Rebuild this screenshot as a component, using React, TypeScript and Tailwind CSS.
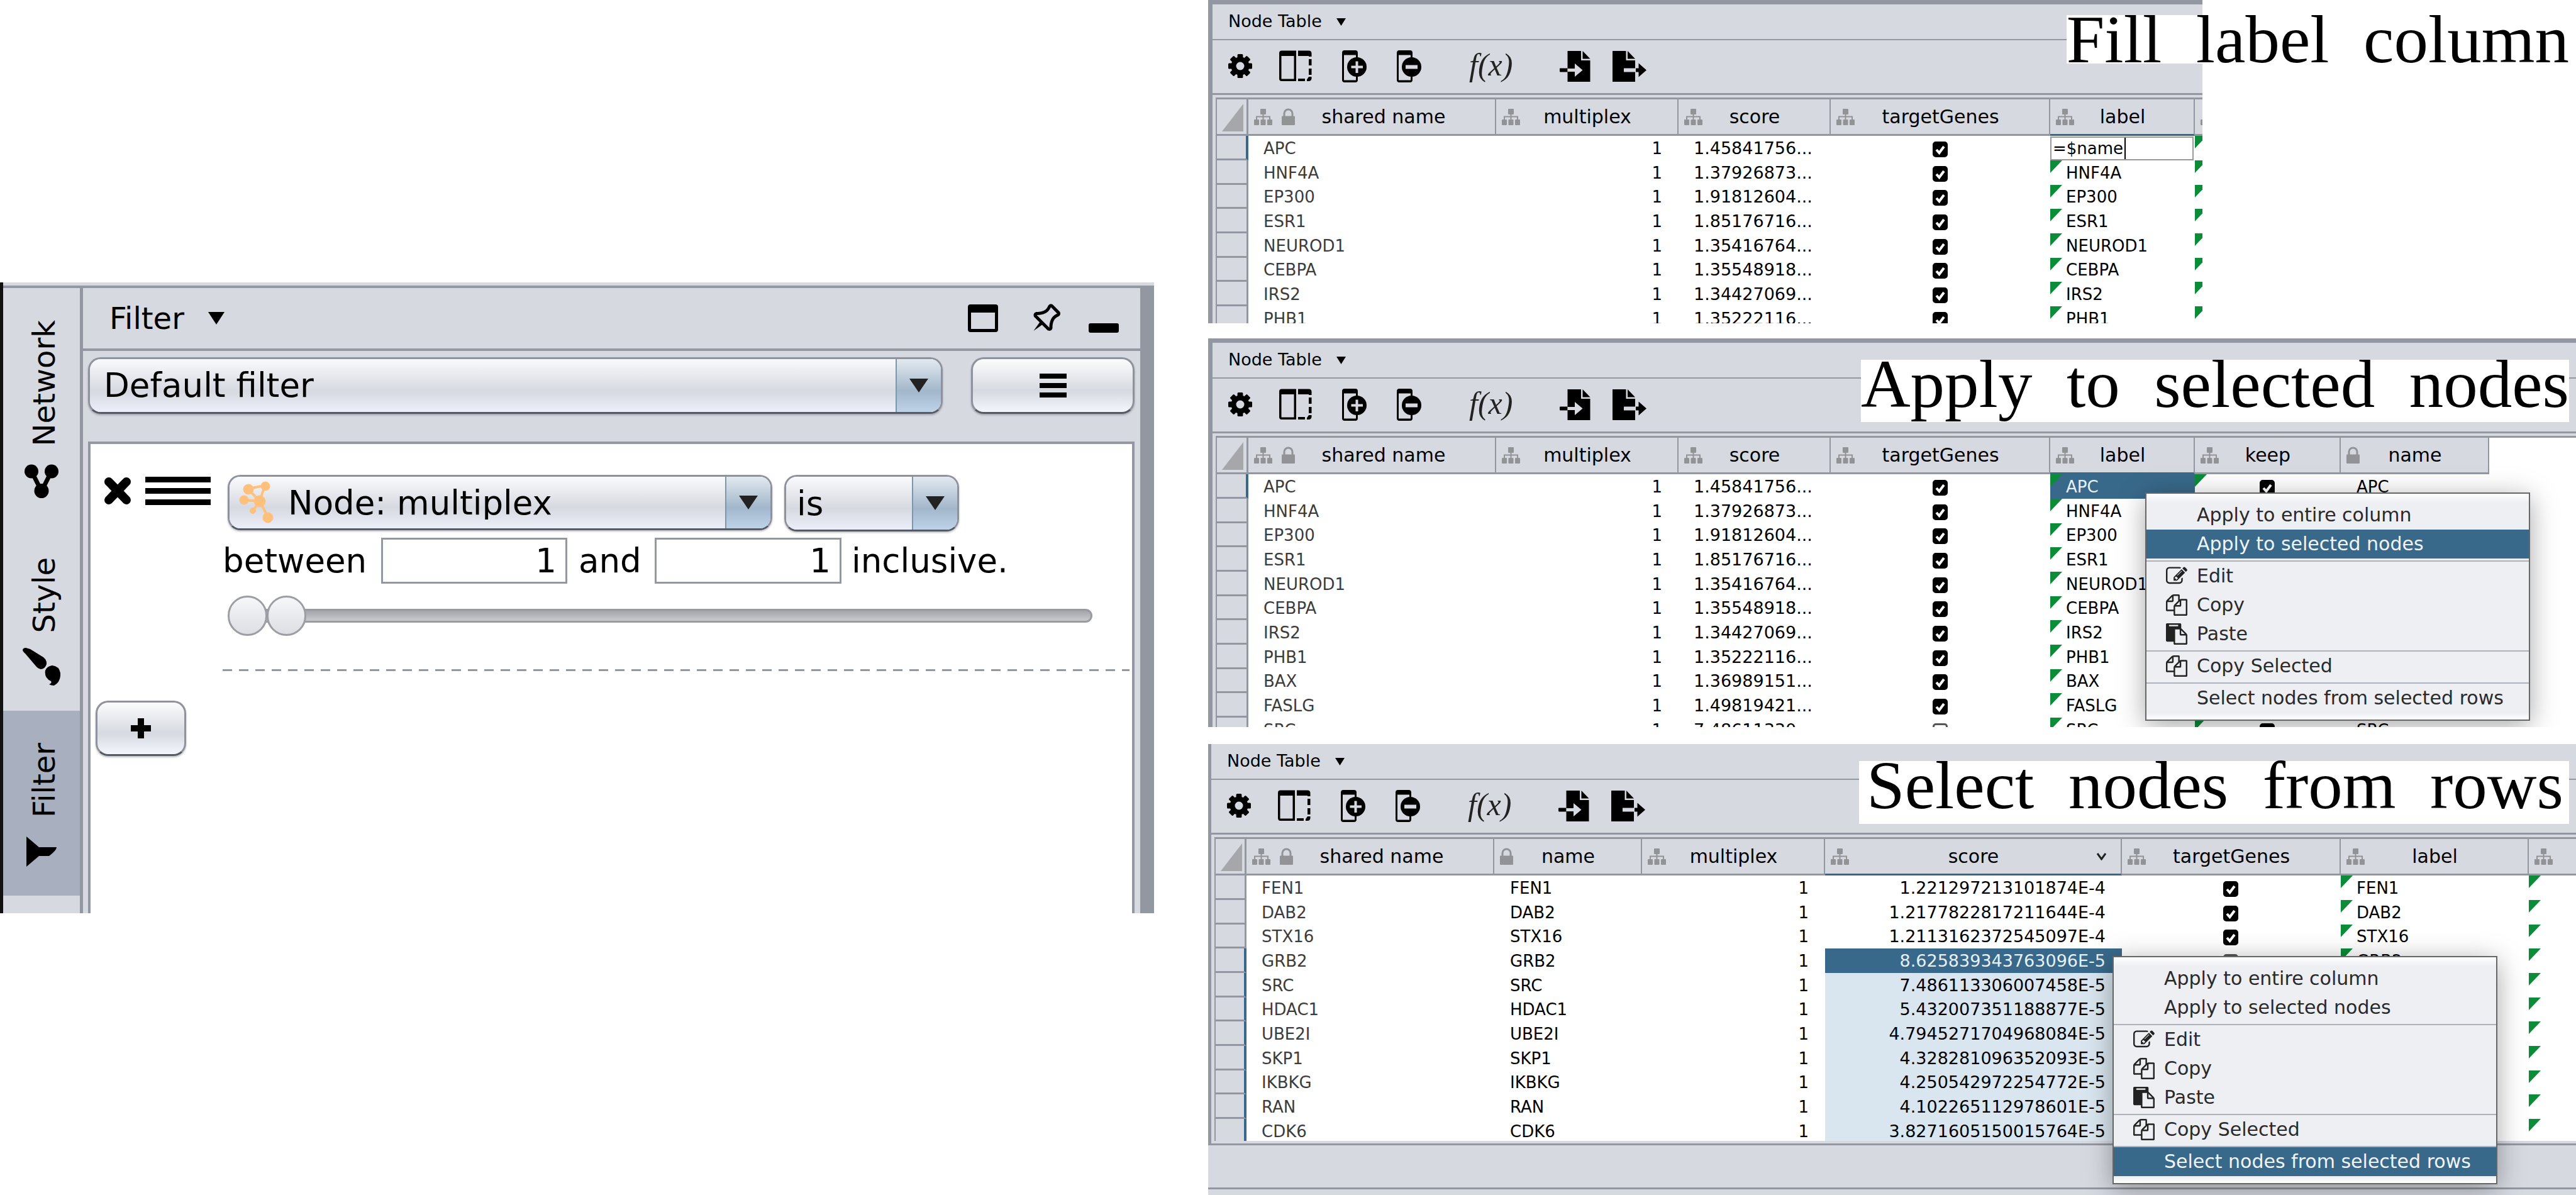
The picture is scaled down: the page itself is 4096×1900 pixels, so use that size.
import type { ReactNode } from "react";
import { TiPinOutline } from "react-icons/ti";

/* ---------- icons ---------- */

function Gear() {
  return (
    <svg className="h-[38px] w-[38px]" viewBox="0 0 38 38">
      <circle cx="19" cy="19" r="10.5" fill="none" stroke="#000" strokeWidth="8" />
      {[0, 45, 90, 135].map((a) => (
        <rect key={a} x="14.6" y="0" width="8.8" height="38" rx="1.5" transform={`rotate(${a} 19 19)`} />
      ))}
      <circle cx="19" cy="19" r="6.5" fill="#d6d9e0" />
    </svg>
  );
}

function SplitColumns() {
  return (
    <svg className="h-[50px] w-[52px]" viewBox="0 0 52 50">
      <path d="M4 0.5H27V49H4Q0 49 0 45V4.500Q0 0.500 4 0.500ZM3.500 9V45.500H23.500V9Z" fillRule="evenodd" />
      <path d="M30 0.500H47Q51.500 0.500 51.500 5V10H47V9H30Z" />
      <path d="M47 14H51.500V24H47ZM47 29H51.500V39H47ZM30 45H41V49H30ZM47 42H51.500V45Q51 49 47 49H44V46.500Z" />
    </svg>
  );
}

function ColumnBadge({ plus }: { plus?: boolean }) {
  return (
    <svg className="h-[51px] w-[39px]" viewBox="0 0 39 51">
      <path d="M4 0H21Q25 0 25 4V47Q25 51 21 51H4Q0 51 0 47V4Q0 0 4 0ZM3 7.500V47.500H22V7.500Z" fillRule="evenodd" />
      <circle cx="23.500" cy="26.500" r="15.500" />
      <path d={plus ? "M14.500 26.500H33M23.500 17.500V36" : "M14 26.500H33"} stroke="#d6d9e0" strokeWidth={plus ? 4 : 6} />
    </svg>
  );
}

function ImportFile() {
  return (
    <svg className="h-[49px] w-[49px]" viewBox="0 0 49 49">
      <path d="M12.500 0H34V15H48.500V49H12.500Z" />
      <path d="M36.500 0V12.500H48.500Z" />
      <path d="M0 28Q0 27.500 1 27.500H12.500V33.500H1Q0 33.500 0 32Z" />
      <path d="M12.500 28H24V20L36.500 30.500L24 41V33H12.500Z" fill="#d6d9e0" />
    </svg>
  );
}

function ExportFile() {
  return (
    <svg className="h-[49px] w-[54px]" viewBox="0 0 54 49">
      <path d="M0 0H21.500V15H36V49H0Z" />
      <path d="M24 0V12.500H36Z" />
      <path d="M18 27.500H36V33.500H18Z" fill="#d6d9e0" />
      <path d="M37 27.500H41.500V19.500L54 30.500L41.500 41.500V33.500H37Z" />
    </svg>
  );
}

function Sitemap() {
  return (
    <svg className="h-[26px] w-[29px] shrink-0" viewBox="0 0 29 26" fill="#919396">
      <rect x="10" y="0" width="9" height="9" rx="1" />
      <path d="M14.500 9V18M4 18V12.500H25V18" fill="none" stroke="#919396" strokeWidth="2" />
      <rect x="0" y="17" width="8" height="9" rx="1" />
      <rect x="10.500" y="17" width="8" height="9" rx="1" />
      <rect x="21" y="17" width="8" height="9" rx="1" />
    </svg>
  );
}

function Lock() {
  return (
    <svg className="h-[27px] w-[21px] shrink-0" viewBox="0 0 21 27">
      <path d="M4 13V8.500A6.500 6.500 0 0 1 17 8.500V13" fill="none" stroke="#919396" strokeWidth="3" />
      <rect x="0" y="12.500" width="21" height="14.500" rx="1" fill="#919396" />
    </svg>
  );
}

const MENU_PATHS = {
  edit: "M888 1184l116-116-152-152-116 116v56h96v96h56zm440-720q-16-16-33 1l-350 350q-17 17-1 33t33-1l350-350q17-17 1-33zm80 594v190q0 119-84.500 203.500t-203.500 84.500h-832q-119 0-203.500-84.500t-84.500-203.500v-832q0-119 84.500-203.500t203.500-84.500h832q63 0 117 25 15 7 18 23 3 17-9 29l-49 49q-14 14-32 8-23-6-45-6h-832q-66 0-113 47t-47 113v832q0 66 47 113t113 47h832q66 0 113-47t47-113v-126q0-13 9-22l64-64q15-15 35-7t20 29zm-96-738l288 288-672 672h-288v-288zm444 132l-92 92-288-288 92-92q28-28 68-28t68 28l152 152q28 28 28 68t-28 68z",
  copy: "M1696 384q40 0 68 28t28 68v1216q0 40-28 68t-68 28h-960q-40 0-68-28t-28-68v-288h-544q-40 0-68-28t-28-68v-672q0-40 20-88t48-76l408-408q28-28 76-48t88-20h416q40 0 68 28t28 68v328q68-40 128-40h416zm-544 213l-299 299h299v-299zm-640-384l-299 299h299v-299zm196 647l316-316v-416h-384v416q0 40-28 68t-68 28h-416v640h512v-256q0-40 20-88t48-76zm956 804v-1152h-384v416q0 40-28 68t-68 28h-416v640h896z",
  paste: "M768 1664h896v-640h-416q-40 0-68-28t-28-68v-416h-384v1152zm256-1440v-64q0-13-9.500-22.500t-22.500-9.500h-704q-13 0-22.500 9.500t-9.500 22.500v64q0 13 9.500 22.500t22.500 9.500h704q13 0 22.500-9.500t9.500-22.500zm256 672h299l-299-299v299zm512 128v672q0 40-28 68t-68 28h-960q-40 0-68-28t-28-68v-160h-544q-40 0-68-28t-28-68v-1344q0-40 28-68t68-28h1088q40 0 68 28t28 68v328q21 13 36 28l408 408q28 28 48 76t20 88z",
};

function Triangle({ className }: { className: string }) {
  return (
    <svg className={className} viewBox="0 0 10 8" preserveAspectRatio="none">
      <path d="M0 0H10L5 8Z" fill="currentColor" />
    </svg>
  );
}

/* ---------- filter panel ---------- */

function SideTab({ label, icon, className }: { label: string; icon: ReactNode; className: string }) {
  return (
    <button type="button" className={`flex w-full flex-col items-center pt-[51px] text-[48px] leading-[56px] ${className}`}>
      <span className="ml-[8px] rotate-180 [writing-mode:vertical-rl]">{label}</span>
      {icon}
    </button>
  );
}

function Combo({ label, value, className, padding, icon }: { label: string; value: string; className: string; padding: string; icon?: ReactNode }) {
  return (
    <div className={`relative overflow-hidden rounded-[20px] border-[3px] border-[#8d929c] border-b-[#555b66] shadow-[0_2px_3px_rgba(0,0,0,0.25)] ${className}`}>
      <select
        aria-label={label}
        defaultValue={value}
        className={`h-full w-full appearance-none bg-[linear-gradient(#f9fafc,#d6d9e0_60%,#eceff9)] text-[53px] leading-none outline-none ${padding}`}
      >
        <option>{value}</option>
      </select>
      {icon}
      <span className="pointer-events-none absolute inset-y-0 right-0 grid w-[72px] place-items-center border-l-2 border-[#7c96ab] bg-[linear-gradient(#e2e9ef,#a2b7cb_60%,#bfd3e8)] text-[#222]">
        <Triangle className="h-[22px] w-[30px]" />
      </span>
    </div>
  );
}

const PUSH =
  "grid shrink-0 place-items-center rounded-[20px] border-[3px] border-[#8d929c] border-b-[#555b66] bg-[linear-gradient(#fbfcfd,#d6d9e0_60%,#f4f6fd)] shadow-[0_2px_3px_rgba(0,0,0,0.25)]";

const THUMB =
  "pointer-events-none absolute inset-y-0 right-0 h-full appearance-none bg-transparent [&::-webkit-slider-thumb]:pointer-events-auto [&::-webkit-slider-thumb]:h-[64px] [&::-webkit-slider-thumb]:w-[63px] [&::-webkit-slider-thumb]:appearance-none [&::-webkit-slider-thumb]:rounded-full [&::-webkit-slider-thumb]:border-[3px] [&::-webkit-slider-thumb]:border-[#9c9ea3] [&::-webkit-slider-thumb]:bg-[linear-gradient(#f6f7f9,#dcdee3)]";

function NodeGlyph() {
  return (
    <svg className="pointer-events-none absolute top-[6px] left-[15px] h-[68px] w-[56px]" viewBox="0 0 56 68" fill="#ffc07c" stroke="#ffc07c">
      <path d="M14 13L41 8L33 33ZM7 31L33 33L22 48M33 33L46 58" fill="none" strokeWidth="4" />
      <circle cx="42" cy="9" r="7" />
      <circle cx="15" cy="14" r="8" />
      <circle cx="8" cy="31" r="7" />
      <circle cx="33" cy="33" r="9" />
      <circle cx="22" cy="48" r="4.500" />
      <circle cx="46" cy="59" r="8" />
    </svg>
  );
}

function FilterPanel() {
  return (
    <section className="flex h-[1003px] overflow-hidden border-l-[5px] border-[#111] bg-[#d6d9e0] pt-[5px]">
      <nav className="w-[127px] shrink-0 border-t-[4px] border-r-[5px] border-[#9297a1]">
        <SideTab
          label="Network"
          className="h-[377px]"
          icon={
            <svg className="mt-[29px] h-[54px] w-[54px]" viewBox="0 0 54 54">
              <path d="M11 11L27 43L43 11" fill="none" stroke="#000" strokeWidth="7" />
              <circle cx="11" cy="11.500" r="11" />
              <circle cx="43" cy="11.500" r="11" />
              <circle cx="27" cy="42.500" r="11.500" />
            </svg>
          }
        />
        <SideTab
          label="Style"
          className="h-[295px]"
          icon={
            <svg className="mt-[23px] h-[60px] w-[60px]" viewBox="0 0 60 60">
              <path d="M0 3Q1 0 5 0L12 2L33 15Q39 20 38 26Q36 33 29 34Q24 33 21 29L4 9Q0 6 0 3Z" />
              <path d="M36 36Q39 29 47 28Q58 29 60 40Q61 54 50 60Q45 60 42 58Q47 56 45 53Q34 48 36 36Z" />
            </svg>
          }
        />
        <SideTab
          label="Filter"
          className="h-[294px] bg-[#a8afbe]"
          icon={
            <svg className="mt-[30px] h-[48px] w-[48px]" viewBox="0 0 48 48">
              <path d="M0 0L20 17H48Q48 22 36 31H20L0 48Z" />
            </svg>
          }
        />
      </nav>

      <div className="flex min-w-0 flex-1 flex-col border-t-[4px] border-r-[22px] border-[#9297a1]">
        <header className="flex h-[100px] shrink-0 items-center border-b-[4px] border-[#9297a1] pr-[34px] pl-[42px] text-[48px]">
          <button type="button" className="flex items-center gap-[38px]">
            Filter
            <Triangle className="h-[20px] w-[26px]" />
          </button>
          <button type="button" aria-label="Float" className="ml-auto h-[44px] w-[48px] rounded-[4px] border-[5px] border-t-[13px] border-black" />
          <button type="button" aria-label="Pin" className="ml-[44px]">
            <TiPinOutline className="h-[60px] w-[60px]" />
          </button>
          <button type="button" aria-label="Minimize" className="mt-[30px] ml-[40px] h-[15px] w-[48px] rounded-[3px] bg-black" />
        </header>

        <div className="flex shrink-0 gap-[45px] pt-[10px] pr-[9px] pl-[8px]">
          <Combo label="Filter" value="Default filter" className="h-[90px] flex-1" padding="pl-[22px] pb-[2px]" />
          <button type="button" aria-label="Options" className={`h-[90px] w-[260px] ${PUSH}`}>
            <span className="flex w-[43px] flex-col gap-[7px] py-1">
              <span className="h-[8px] bg-black" />
              <span className="h-[8px] bg-black" />
              <span className="h-[8px] bg-black" />
            </span>
          </button>
        </div>

        <div className="mt-[44px] mr-[9px] ml-[8px] flex-1 border-[4px] border-b-0 border-[#9297a1] bg-white">
          <div className="flex items-start pt-[49px] pl-[21px]">
            <div className="flex w-[189px] shrink-0 gap-[22px] pt-[3px]">
              <button type="button" aria-label="Remove" className="h-[45px] w-[44px]">
                <svg viewBox="0 0 44 45" className="h-full w-full">
                  <path d="M8 8L36 37M36 8L8 37" stroke="#000" strokeWidth="14" strokeLinecap="round" />
                </svg>
              </button>
              <button type="button" aria-label="Move" className="flex w-[104px] flex-col gap-[9px]">
                <span className="h-[9px] w-full bg-black" />
                <span className="h-[9px] w-full bg-black" />
                <span className="h-[9px] w-full bg-black" />
              </button>
            </div>
            <div className="flex-1">
              <div className="ml-[8px] flex items-start gap-[19px]">
                <Combo label="Attribute" value="Node: multiplex" className="h-[88px] w-[866px]" padding="pl-[93px]" icon={<NodeGlyph />} />
                <Combo label="Condition" value="is" className="h-[90px] w-[278px]" padding="pl-[17px]" />
              </div>
              <div className="mt-[10px] flex text-[53px] leading-[73px]">
                <label htmlFor="low" className="w-[252px]">between</label>
                <input id="low" defaultValue="1" className="h-[73px] w-[296px] border-[3px] border-[#9297a1] bg-white pr-[14px] text-right leading-none" />
                <label htmlFor="high" className="w-[139px] pl-[18px]">and</label>
                <input id="high" defaultValue="1" className="h-[73px] w-[297px] border-[3px] border-[#9297a1] bg-white pr-[14px] text-right leading-none" />
                <span className="pl-[16px]">inclusive.</span>
              </div>
              <div className="relative mt-[19px] mr-[63px] ml-[8px] flex h-[64px] items-center">
                <div className="ml-[20px] h-[22px] flex-1 rounded-full border-[3px] border-[#999ba0] bg-[linear-gradient(#a3a5aa,#c9cacd)]" />
                <input type="range" aria-label="Lower bound" defaultValue="0" className={`left-0 w-full ${THUMB}`} />
                <input type="range" aria-label="Upper bound" defaultValue="0" className={`left-[62px] w-[calc(100%-62px)] ${THUMB}`} />
              </div>
              <div className="mt-[53px] mr-[4px] h-[3px] bg-[repeating-linear-gradient(90deg,#9297a1_0_15px,transparent_15px_26px)]" />
            </div>
          </div>
          <button type="button" aria-label="Add condition" className={`mt-[47px] ml-[8px] h-[88px] w-[144px] ${PUSH}`}>
            <svg className="h-[38px] w-[38px]" viewBox="0 0 38 38">
              <path d="M3 19H35M19 3V35" stroke="#000" strokeWidth="10" />
            </svg>
          </button>
        </div>
      </div>
    </section>
  );
}

/* ---------- node tables ---------- */

type Kind = "name" | "one" | "short" | "score" | "check" | "formula" | "formulaCheck" | "text";
type Column = { title: string; icons: "tree" | "lock" | "both"; width: string; kind: Kind; active?: boolean; sorted?: boolean };
type Row = { name: string; score: string; hit: boolean };

function HeaderCell({ col }: { col: Column }) {
  return (
    <th scope="col" className={`h-[58px] border-r-[2px] border-b-[3px] border-r-[#9297a1] p-0 font-normal ${col.active ? "border-b-[#39698a]" : "border-b-[#9297a1]"}`}>
      <div className="flex items-center">
        <span className={`flex shrink-0 items-center gap-[15px] pl-[9px] ${col.icons === "both" ? "w-[76px]" : "w-[40px]"}`}>
          {col.icons !== "lock" && <Sitemap />}
          {col.icons !== "tree" && <Lock />}
        </span>
        <span className="flex-1 text-center text-[30px] leading-[55px]">{col.title}</span>
        <span className="w-[38px] shrink-0">
          {col.sorted && (
            <svg className="h-[12px] w-[15px]" viewBox="0 0 15 12">
              <path d="M1 1L7.500 10L14 1" fill="none" stroke="#222" strokeWidth="3" />
            </svg>
          )}
        </span>
      </div>
    </th>
  );
}

function Tick({ on, label }: { on: boolean; label: string }) {
  return (
    <span className="relative mx-auto mt-[3px] block h-[25px] w-[24px]">
      <input
        type="checkbox"
        aria-label={label}
        defaultChecked={on}
        className="block h-full w-full appearance-none rounded-[5px] border-[3px] border-[#555] bg-white checked:border-black checked:bg-black"
      />
      {on && (
        <svg className="pointer-events-none absolute inset-0 h-full w-full" viewBox="0 0 24 25">
          <path d="M6 13L10.500 18L18 8" fill="none" stroke="#fff" strokeWidth="4" />
        </svg>
      )}
    </span>
  );
}

function Flag() {
  return (
    <svg className="absolute top-0 left-0 h-[20px] w-[19px]" viewBox="0 0 19 20">
      <path d="M0 0H19L0 20Z" fill="#0c8c38" />
    </svg>
  );
}

function Cell({ col, row, index, selectFrom, editing }: { col: Column; row: Row; index: number; selectFrom?: number; editing?: boolean }) {
  const current = col.active && index === selectFrom;
  const inRange = col.active && selectFrom !== undefined && index > selectFrom && col.kind === "score";
  const tone = current ? "bg-[#39698a] text-[#e8f0f4]" : inRange ? "bg-[#dae6ef]" : "";
  switch (col.kind) {
    case "name":
      return <td className="p-0 pl-[24px] text-[26px] text-[#3c3c3c]">{row.name}</td>;
    case "text":
      return <td className="p-0 pl-[25px] text-[26px]">{row.name}</td>;
    case "one":
      return <td className="p-0 pr-[26px] text-right text-[26px]">1</td>;
    case "short":
      return <td className="p-0 pl-[24px] text-[27px]">{row.score}</td>;
    case "score":
      return <td className={`p-0 pr-[26px] text-right text-[27px] ${tone}`}>{row.score}</td>;
    case "check":
      return (
        <td className="p-0 pr-[2px]">
          <Tick on={row.hit} label={`${col.title} ${row.name}`} />
        </td>
      );
    case "formulaCheck":
      return (
        <td className="relative p-0 pr-[2px]">
          <Flag />
          {col.title && <Tick on label={`${col.title} ${row.name}`} />}
        </td>
      );
    case "formula":
      if (editing && index === 0)
        return (
          <td className="p-0">
            <input
              aria-label="Edit label"
              defaultValue="=$name"
              className="block h-[38px] w-[228px] border-[2px] border-[#999] bg-[linear-gradient(#000,#000)] bg-[length:2px_100%] bg-[position:116px_0] bg-no-repeat pl-[2px] text-[26px] leading-none"
            />
          </td>
        );
      return (
        <td className={`relative p-0 pl-[25px] text-[26px] ${tone}`}>
          <Flag />
          {row.name}
        </td>
      );
  }
}

function TableView({ columns, rows, width, corner, selectFrom, selectTo, editing }: {
  columns: Column[]; rows: Row[]; width: string; corner: string; selectFrom?: number; selectTo?: number; editing?: boolean;
}) {
  return (
    <table className={`table-fixed border-separate border-spacing-0 leading-[38px] ${width}`}>
      <colgroup>
        <col className={corner} />
        {columns.map((c, i) => (
          <col key={i} className={c.width} />
        ))}
      </colgroup>
      <thead className="bg-[#d6d9e0]">
        <tr>
          <th className="h-[58px] border-r-[3px] border-b-[3px] border-[#9297a1] p-0">
            <svg className="mt-[2px] ml-[8px] h-[44px] w-[34px]" viewBox="0 0 34 44">
              <path d="M34 0V44H0Z" fill="#a5a7ab" />
            </svg>
          </th>
          {columns.map((c, i) => (
            <HeaderCell key={i} col={c} />
          ))}
        </tr>
      </thead>
      <tbody>
        {rows.map((r, i) => {
          const marked = i >= (selectFrom ?? 0) && i <= (selectTo ?? 0);
          return (
            <tr key={r.name} className="h-[39px] nth-[3n]:h-[38px]">
              <td className={`border-b-[3px] border-b-[#9297a1] bg-[#d6d9e0] p-0 ${marked ? "border-r-[4px] border-r-[#39698a]" : "border-r-[3px] border-r-[#9297a1]"}`} />
              {columns.map((c, j) => (
                <Cell key={j} col={c} row={r} index={i} selectFrom={selectFrom} editing={editing} />
              ))}
            </tr>
          );
        })}
      </tbody>
    </table>
  );
}

function NodeTablePanel({ className, children }: { className: string; children: ReactNode }) {
  return (
    <div className={`flex flex-col overflow-hidden border-[#9297a1] bg-[#d6d9e0] ${className}`}>
      <div className="flex h-[57px] shrink-0 items-center border-b-[2px] border-[#9297a1] pl-[25px] text-[27px]">
        <button type="button" className="flex items-center gap-[23px]">
          Node Table
          <Triangle className="h-[12px] w-[15px]" />
        </button>
      </div>
      <div className="flex h-[87px] shrink-0 items-center border-b-[3px] border-[#9297a1] pb-[2px] pl-[25px]">
        <button type="button" aria-label="Table options"><Gear /></button>
        <button type="button" aria-label="Show columns" className="ml-[43px]"><SplitColumns /></button>
        <button type="button" aria-label="Create column" className="ml-[48px]"><ColumnBadge plus /></button>
        <button type="button" aria-label="Delete column" className="ml-[48px]"><ColumnBadge /></button>
        <button type="button" className="ml-[76px] w-[72px] pb-[4px] text-left font-['Liberation_Serif',serif] text-[50px] leading-[60px] text-[#222] italic">f(x)</button>
        <button type="button" aria-label="Import" className="ml-[72px]"><ImportFile /></button>
        <button type="button" aria-label="Export" className="ml-[35px]"><ExportFile /></button>
      </div>
      <div className="mt-[4px] ml-[5px] flex-1 overflow-hidden border-t-[3px] border-l-[2px] border-[#9297a1] bg-white">{children}</div>
    </div>
  );
}

function Caption({ children, className }: { children: string; className: string }) {
  return (
    <h2 className={`absolute right-[11px] bg-white font-['Liberation_Serif',serif] text-[109px] leading-[77px] whitespace-pre ${className}`}>{children}</h2>
  );
}

type Item = { label: string; icon?: keyof typeof MENU_PATHS; rule?: boolean };
const MENU: Item[] = [
  { label: "Apply to entire column" },
  { label: "Apply to selected nodes" },
  { label: "Edit", icon: "edit", rule: true },
  { label: "Copy", icon: "copy" },
  { label: "Paste", icon: "paste" },
  { label: "Copy Selected", icon: "copy", rule: true },
  { label: "Select nodes from selected rows", rule: true },
];

function ContextMenu({ active, className }: { active: string; className: string }) {
  return (
    <ul role="menu" className={`absolute w-[612px] border-[2px] border-[#666] bg-[linear-gradient(#fff,#edeff3_14px,#edeff3_calc(100%-10px),#fff)] py-[11px] shadow-[0_8px_40px_rgba(0,0,0,0.35)] ${className}`}>
      {MENU.map((m) => (
        <li key={m.label} role="none" className={m.rule ? "mt-[3px] border-t-[2px] border-[#aeb2ba]" : ""}>
          <button
            type="button"
            role="menuitem"
            className={`flex h-[46px] w-full items-center text-[30px] leading-[46px] ${m.label === active ? "bg-[#39698a] text-[#eef4f7]" : "text-[#2a2a2a]"}`}
          >
            <span className="w-[80px] shrink-0 pl-[31px]">
              {m.icon && (
                <svg className="h-[34px] w-[34px]" viewBox="0 0 1792 1792">
                  <path d={MENU_PATHS[m.icon]} fill="#222" />
                </svg>
              )}
            </span>
            {m.label}
          </button>
        </li>
      ))}
    </ul>
  );
}

const BASE: Column[] = [
  { title: "shared name", icons: "both", width: "w-[394px]", kind: "name" },
  { title: "multiplex", icons: "tree", width: "w-[290px]", kind: "one" },
  { title: "score", icons: "tree", width: "w-[242px]", kind: "short" },
  { title: "targetGenes", icons: "tree", width: "w-[349px]", kind: "check" },
  { title: "label", icons: "tree", width: "w-[230px]", kind: "formula", active: true },
  { title: "keep", icons: "tree", width: "w-[232px]", kind: "formulaCheck" },
];

const WITH_NAME: Column[] = [...BASE, { title: "name", icons: "lock", width: "w-[236px]", kind: "text" }];

const SORTED: Column[] = [
  { title: "shared name", icons: "both", width: "w-[394px]", kind: "name" },
  { title: "name", icons: "lock", width: "w-[235px]", kind: "text" },
  { title: "multiplex", icons: "tree", width: "w-[291px]", kind: "one" },
  { title: "score", icons: "tree", width: "w-[472px]", kind: "score", active: true, sorted: true },
  { title: "targetGenes", icons: "tree", width: "w-[348px]", kind: "check" },
  { title: "label", icons: "tree", width: "w-[299px]", kind: "formula" },
  { title: "", icons: "tree", width: "w-[232px]", kind: "formulaCheck" },
];

const GENES: Row[] = [
  { name: "APC", score: "1.45841756...", hit: true },
  { name: "HNF4A", score: "1.37926873...", hit: true },
  { name: "EP300", score: "1.91812604...", hit: true },
  { name: "ESR1", score: "1.85176716...", hit: true },
  { name: "NEUROD1", score: "1.35416764...", hit: true },
  { name: "CEBPA", score: "1.35548918...", hit: true },
  { name: "IRS2", score: "1.34427069...", hit: true },
  { name: "PHB1", score: "1.35222116...", hit: true },
  { name: "BAX", score: "1.36989151...", hit: true },
  { name: "FASLG", score: "1.49819421...", hit: true },
  { name: "SRC", score: "7.48611330...", hit: false },
];

const RANKED: Row[] = [
  { name: "FEN1", score: "1.221297213101874E-4", hit: true },
  { name: "DAB2", score: "1.2177822817211644E-4", hit: true },
  { name: "STX16", score: "1.2113162372545097E-4", hit: true },
  { name: "GRB2", score: "8.625839343763096E-5", hit: false },
  { name: "SRC", score: "7.486113306007458E-5", hit: false },
  { name: "HDAC1", score: "5.432007351188877E-5", hit: false },
  { name: "UBE2I", score: "4.7945271704968084E-5", hit: false },
  { name: "SKP1", score: "4.328281096352093E-5", hit: false },
  { name: "IKBKG", score: "4.250542972254772E-5", hit: false },
  { name: "RAN", score: "4.102265112978601E-5", hit: false },
  { name: "CDK6", score: "3.8271605150015764E-5", hit: false },
];

export default function App() {
  return (
    <main className="grid min-h-screen grid-cols-[1835fr_2175fr] gap-[86px] overflow-hidden bg-white font-['DejaVu_Sans',sans-serif] text-black">
      <div className="min-w-0 pt-[449px]">
        <FilterPanel />
      </div>

      <div className="flex min-w-0 flex-col">
        <section className="relative">
          <NodeTablePanel className="h-[514px] w-[72.7%] border-t-[7px] border-l-[7px]">
            <TableView columns={BASE} rows={GENES.slice(0, 8)} width="w-[1787px]" corner="w-[50px]" editing />
          </NodeTablePanel>
          <Caption className="top-[24px]">{"Fill  label  column"}</Caption>
        </section>

        <section className="relative mt-[24px] overflow-hidden">
          <NodeTablePanel className="h-[618px] border-t-[7px] border-l-[7px]">
            <TableView columns={WITH_NAME} rows={GENES} width="w-[2023px]" corner="w-[50px]" selectFrom={0} />
          </NodeTablePanel>
          <Caption className="top-[34px] pb-[22px]">{"Apply  to  selected  nodes"}</Caption>
          <ContextMenu active="Apply to selected nodes" className="top-[245px] left-[1490px]" />
        </section>

        <section className="relative mt-[27px] flex flex-1 flex-col overflow-hidden bg-[#d6d9e0]">
          <NodeTablePanel className="h-[638px] border-b-[3px] border-l-[5px] pb-[4px]">
            <TableView columns={SORTED} rows={RANKED} width="w-[2320px]" corner="w-[49px]" selectFrom={3} selectTo={10} />
          </NodeTablePanel>
          <div className="h-[70px] border-b-[3px] border-[#9297a1]" />
          <Caption className="top-[27px] pr-[9px] pb-[23px] pl-[12px]">{"Select  nodes  from  rows"}</Caption>
          <ContextMenu active="Select nodes from selected rows" className="top-[337px] left-[1438px]" />
        </section>
      </div>
    </main>
  );
}
